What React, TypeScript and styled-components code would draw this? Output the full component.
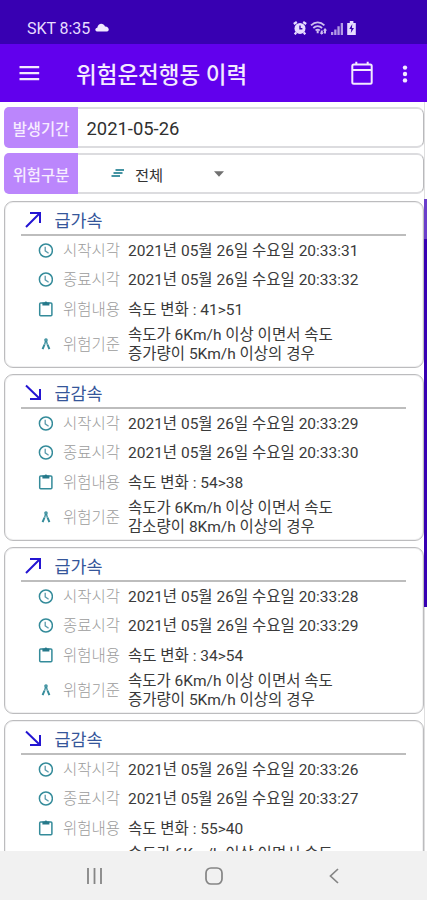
import React from "react";
import styled, { createGlobalStyle } from "styled-components";

const GlobalStyle = createGlobalStyle`
  * { box-sizing: border-box; }
  body { margin: 0; overflow: hidden; background: #fff; }
`;

const Screen = styled.div`
  width: 427px;
  height: 900px;
  display: flex;
  flex-direction: column;
  overflow: hidden;
  background: #fff;
  color: #3a3a3a;
  font-family: Roboto, "Noto Sans CJK KR", sans-serif;
  white-space: nowrap;
`;

const StatusBar = styled.header`
  height: 44px;
  flex: none;
  display: flex;
  align-items: center;
  padding: 12px 70px 0 27px;
  background: #3800b2;
  color: #e6dcff;
  font-size: 16px;
  letter-spacing: -0.05px;
`;

const StatusIcons = styled.div`
  display: flex;
  align-items: center;
  gap: 3px;
  margin-left: auto;
`;

const CloudIcon = styled.svg`
  margin: -2px 0 0 5px;
`;

const AppBar = styled.div`
  height: 58px;
  flex: none;
  display: flex;
  align-items: center;
  padding: 0 17px 0 19px;
  background: #6100ed;
  color: #f3eaff;
`;

const Title = styled.h1`
  margin: 0 auto 0 36px;
  padding-top: 3px;
  font-size: 22.5px;
  font-weight: 500;
  line-height: 30px;
`;

const MoreIcon = styled.svg`
  margin: 2px 0 0 27px;
`;

const Body = styled.main`
  flex: 1;
  min-height: 0;
  display: flex;
  overflow: hidden;
`;

const Content = styled.div`
  width: 424px;
  flex: none;
  padding: 5px 0 0 4px;
  display: flex;
  flex-direction: column;
`;

const Field = styled.section`
  height: 41px;
  flex: none;
  display: flex;
  align-items: center;
  margin-bottom: 5px;
  border: 2px solid #dcdcdf;
  border-right: 1px solid #b9b9bc;
  border-left: 0;
  border-radius: 7px;
`;

const FieldLabel = styled.div`
  width: 74px;
  height: 41px;
  flex: none;
  display: flex;
  align-items: center;
  justify-content: center;
  border-radius: 5px 0 0 5px;
  background: #bb86fc;
  color: #f7edff;
  font-size: 15.4px;
  font-weight: 500;
`;

const DateValue = styled.div`
  margin-left: 8.5px;
  padding-top: 1px;
  color: #303030;
  font-size: 18.4px;
`;

const Select = styled.div`
  display: flex;
  align-items: center;
  margin-left: 33px;
  color: #333;
  font-size: 15.3px;
`;

const SelectText = styled.span`
  width: 79px;
  margin-left: 11px;
`;

const CardList = styled.div`
  display: flex;
  flex-direction: column;
  gap: 6px;
  padding-top: 2px;
`;

const Card = styled.article`
  height: 167px;
  flex: none;
  padding: 4px 17px 0 16px;
  border: 1px solid #bcbcbe;
  border-radius: 9px;
  box-shadow: inset 0 0 0 1px #f0f0f1;
`;

const CardHeader = styled.div`
  height: 30px;
  display: flex;
  align-items: center;
  gap: 12.5px;
  padding: 0 0 1px 4px;
  border-bottom: 2px solid #bdbdbd;
  color: #35569a;
  font-size: 17.4px;
`;

const Row = styled.div<{ $tall?: boolean }>`
  height: ${(p) => (p.$tall ? 42 : 29.2)}px;
  display: flex;
  align-items: center;
  padding: ${(p) => (p.$tall ? 0 : 1)}px 0 0 17px;
  font-size: 15.5px;
  line-height: 18.8px;

  svg {
    margin-top: ${(p) => (p.$tall ? 0 : -2)}px;
  }
`;

const RowLabel = styled.span`
  width: 65px;
  margin-left: 10px;
  padding-top: 1px;
  color: #9c9c9c;
  font-weight: 300;
`;

const RowValue = styled.span`
  padding-top: 1px;
  white-space: pre-line;
`;

const ScrollTrack = styled.div`
  width: 3px;
  flex: none;
  padding-top: 97px;
  border-left: 1px solid #dededf;
`;

const ScrollThumb = styled.div`
  width: 3px;
  height: 408px;
  margin-left: -1px;
  background: linear-gradient(#6a3fcb 0 40px, #3700b3 40px);
`;

const NavBar = styled.nav`
  height: 49px;
  flex: none;
  display: grid;
  grid-template-columns: repeat(3, 120px);
  justify-content: center;
  align-items: center;
  justify-items: center;
  padding-left: 1px;
  background: #f1f1f1;
`;

const ClockIcon = () => (
  <svg width="15" height="15" viewBox="0 0 15 15" fill="none" stroke="#348b9a">
    <circle cx="7.9" cy="7.5" r="6.5" strokeWidth="1.5" />
    <path d="M7.2 3.8v4l3.4 2.5" stroke="#5c9bac" strokeWidth="1.3" />
  </svg>
);

const ClipboardIcon = () => (
  <svg width="15" height="17" viewBox="0 0 15 17" fill="none">
    <rect x="1.7" y="2.9" width="12.2" height="12.9" rx="1" stroke="#348b9a" strokeWidth="1.5" />
    <path d="M4.4 2.4h2a1.7 1.7 0 0 1 3 0h2v3.2h-7z" fill="#26798a" />
  </svg>
);

const CompassIcon = () => (
  <svg width="15" height="15" viewBox="0 0 15 15" fill="none" stroke="#348b9a">
    <circle cx="8" cy="3" r="1.1" strokeWidth="1.3" />
    <path d="M7.5 4 6.7 7.5M8.5 4 9.3 7.5" strokeWidth="1.3" />
    <path d="M6.5 7.5 4.6 12.2M9.5 7.5l1.9 4.7" strokeWidth="2" />
  </svg>
);

const ArrowIcon = ({ up }: { up: boolean }) => (
  <svg width="17" height="17" viewBox="0 0 17 17" fill="none" stroke="#2415d2" strokeWidth="2">
    <path d={up ? "M1 16 15 2M5 2h10v10" : "M1 1.5l14 13.5M5 15h10V5"} />
  </svg>
);

const StatusGlyphs = () => (
  <StatusIcons>
    <svg width="14" height="14" viewBox="0 0 14 14">
      <g fill="none" stroke="#e6dcff" strokeWidth="2.2">
        <path d="m.8 3 3-2M10.2 1l3 2M3.2 11.4l-1.4 2M10.8 11.4l1.4 2" />
      </g>
      <circle cx="7" cy="7.4" r="5.5" fill="#e6dcff" />
      <path d="M7 4.6v3.2h2.4" fill="none" stroke="#3800b2" strokeWidth="1.4" />
    </svg>
    <svg width="18" height="14" viewBox="0 0 18 14" fill="none" stroke="#cdbdf0" strokeWidth="1.8">
      <path d="M1 4.3c4-3.9 9.4-3.9 13.4 0M3.3 7c2.6-2.4 6.2-2.4 8.8 0M5.6 9.5c1.3-1.1 2.9-1.1 4.2 0" />
      <path d="M7.7 9.3v3M11.8 13V9.5M15 7.8v4.7" strokeWidth="2" />
      <path d="m10 11.7 1.8 1.5 1.7-1.5M13.3 9.4 15 7.8l1.8 1.6" strokeWidth="1" />
    </svg>
    <svg width="12" height="13" viewBox="0 0 12 13" fill="#b39be5">
      <path d="M0 10h2.3v3H0zM3.2 7.5h2.3V13H3.2zM6.4 4.3h2.3V13H6.4zM9.7 1H12v12H9.7z" />
    </svg>
    <svg width="11" height="14" viewBox="0 0 11 14">
      <path d="M3.8 0h3.6v2h2.4v12H1.2V2h2.6z" fill="#e6dcff" />
      <path d="m6.3 3-3 5h2L4.8 12 8 6.9H5.9z" fill="#3800b2" />
    </svg>
  </StatusIcons>
);

interface DrivingEvent {
  up: boolean;
  start: string;
  end: string;
  change: string;
}

const events: DrivingEvent[] = [
  { up: true, start: "31", end: "32", change: "41>51" },
  { up: false, start: "29", end: "30", change: "54>38" },
  { up: true, start: "28", end: "29", change: "34>54" },
  { up: false, start: "26", end: "27", change: "55>40" },
];

const DAY = "2021년 05월 26일 수요일 20:33:";

const EventCard = ({ up, start, end, change }: DrivingEvent) => (
  <Card>
    <CardHeader>
      <ArrowIcon up={up} />
      {up ? "급가속" : "급감속"}
    </CardHeader>
    <Row>
      <ClockIcon />
      <RowLabel>시작시각</RowLabel>
      <RowValue>{DAY + start}</RowValue>
    </Row>
    <Row>
      <ClockIcon />
      <RowLabel>종료시각</RowLabel>
      <RowValue>{DAY + end}</RowValue>
    </Row>
    <Row>
      <ClipboardIcon />
      <RowLabel>위험내용</RowLabel>
      <RowValue>{`속도 변화 : ${change}`}</RowValue>
    </Row>
    <Row $tall>
      <CompassIcon />
      <RowLabel>위험기준</RowLabel>
      <RowValue>
        {up
          ? "속도가 6Km/h 이상 이면서 속도\n증가량이 5Km/h 이상의 경우"
          : "속도가 6Km/h 이상 이면서 속도\n감소량이 8Km/h 이상의 경우"}
      </RowValue>
    </Row>
  </Card>
);

export default function App() {
  return (
    <Screen>
      <GlobalStyle />
      <StatusBar>
        SKT 8:35
        <CloudIcon width="14" height="9" viewBox="0 0 14 9" fill="#f0e9ff">
          <path d="M2 8.5C-.5 8 0 5 2.3 4.7 3 0 8.5-.5 10 3.6c4-.2 5 4.3 2 4.9z" />
        </CloudIcon>
        <StatusGlyphs />
      </StatusBar>
      <AppBar>
        <svg width="21" height="16" viewBox="0 0 21 16" fill="#f3eaff">
          <path d="M.5 1h19.7v2.3H.5zM.5 7h19.7v2.3H.5zM.5 13h19.7v2.3H.5z" />
        </svg>
        <Title>위험운전행동 이력</Title>
        <svg width="22" height="24" viewBox="0 0 22 24" fill="none" stroke="#f3eaff" strokeWidth="2">
          <rect x="1.3" y="3.5" width="19.4" height="19.2" rx="1.5" />
          <path d="M1 9h20M5.3.7v3M16.7.7v3" />
        </svg>
        <MoreIcon width="10" height="18" viewBox="0 0 10 18" fill="#f3eaff">
          <circle cx="5" cy="2.6" r="2.2" />
          <circle cx="5" cy="9" r="2.2" />
          <circle cx="5" cy="15.4" r="2.2" />
        </MoreIcon>
      </AppBar>
      <Body>
        <Content>
          <Field>
            <FieldLabel>발생기간</FieldLabel>
            <DateValue>2021-05-26</DateValue>
          </Field>
          <Field>
            <FieldLabel>위험구분</FieldLabel>
            <Select>
              <svg width="13" height="9" viewBox="0 0 13 9" stroke="#4594a3" strokeWidth="1.8">
                <path d="M4.5 1h8.5M2.5 4h9M.5 7h8.5" />
              </svg>
              <SelectText>전체</SelectText>
              <svg width="10" height="6" viewBox="0 0 10 6" fill="#707070">
                <path d="M0 .3h10L5 5.7z" />
              </svg>
            </Select>
          </Field>
          <CardList>
            {events.map((event) => (
              <EventCard key={event.start} {...event} />
            ))}
          </CardList>
        </Content>
        <ScrollTrack>
          <ScrollThumb />
        </ScrollTrack>
      </Body>
      <NavBar>
        <svg width="17" height="16" viewBox="0 0 17 16" stroke="#858585" strokeWidth="1.8">
          <path d="M2 0v16M8.5 0v16M15 0v16" />
        </svg>
        <svg width="18" height="18" viewBox="0 0 18 18" fill="none" stroke="#858585" strokeWidth="1.7">
          <rect x="1" y="1" width="16" height="16" rx="5" />
        </svg>
        <svg width="10" height="16" viewBox="0 0 10 16" fill="none" stroke="#858585" strokeWidth="1.7">
          <path d="M9 1 1.5 8 9 15" />
        </svg>
      </NavBar>
    </Screen>
  );
}
